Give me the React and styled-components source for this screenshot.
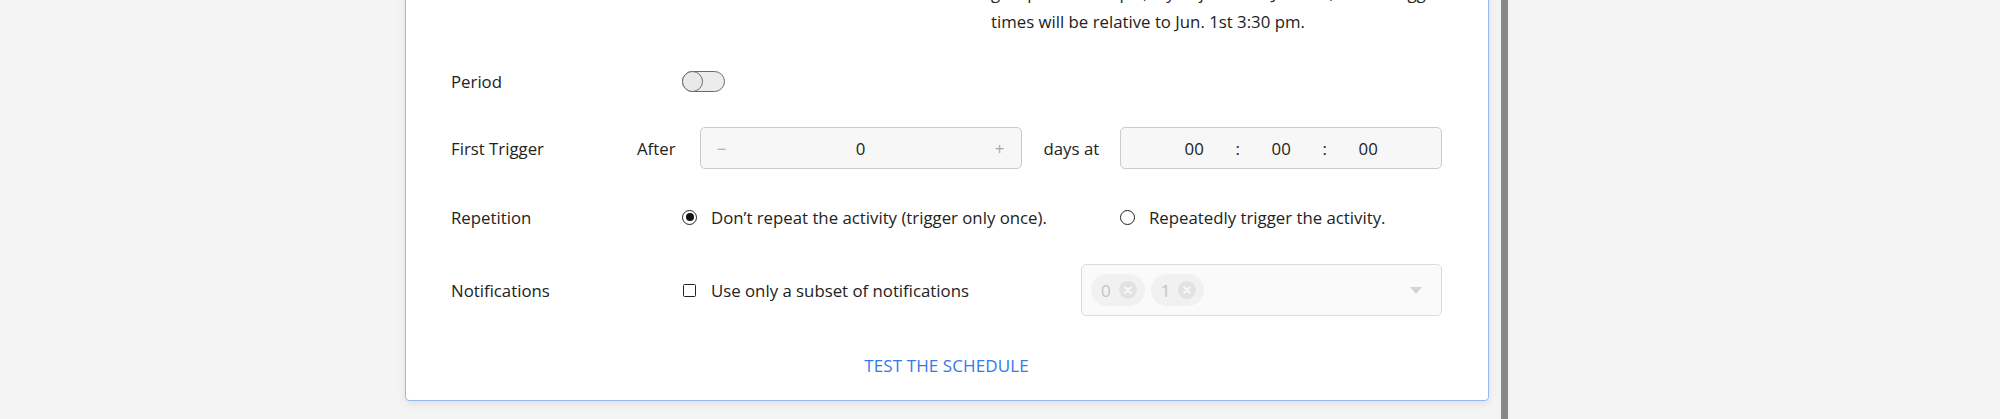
import React from 'react';
import styled, { createGlobalStyle } from 'styled-components';

const GlobalStyle = createGlobalStyle`
  html, body {
    margin: 0;
    padding: 0;
    height: 419px;
    overflow: hidden;
    background: #f4f4f4;
  }
  body {
    font-family: "Open Sans", "Noto Sans", sans-serif;
    color: #222;
  }
`;

const App = () => {
    return (
        <Layout>
            <GlobalStyle />
            <Pane>
                <Card>
                    <Description>
                        group. For example, if you join it on Jun. 1st, all the trigger
                        <br />
                        times will be relative to Jun. 1st 3:30 pm.
                    </Description>

                    <Row gap={24}>
                        <Label>Period</Label>
                        <Controls indent>
                            <Toggle><Knob /></Toggle>
                        </Controls>
                    </Row>

                    <Row gap={25}>
                        <Label>First Trigger</Label>
                        <Controls>
                            <InlineText right={24}>After</InlineText>
                            <NumberBox>
                                <StepSign>−</StepSign>
                                <span>0</span>
                                <StepSign>+</StepSign>
                            </NumberBox>
                            <InlineText left={22} right={21}>days at</InlineText>
                            <TimeBox>
                                <TimeCell>00</TimeCell>
                                <TimeCell>:</TimeCell>
                                <TimeCell>00</TimeCell>
                                <TimeCell>:</TimeCell>
                                <TimeCell>00</TimeCell>
                            </TimeBox>
                        </Controls>
                    </Row>

                    <Row gap={27}>
                        <Label>Repetition</Label>
                        <Controls indent>
                            <Option width={438}>
                                <Radio checked />
                                Don’t repeat the activity (trigger only once).
                            </Option>
                            <Option>
                                <Radio />
                                Repeatedly trigger the activity.
                            </Option>
                        </Controls>
                    </Row>

                    <Row gap={26} h={52}>
                        <Label>Notifications</Label>
                        <Controls indent>
                            <Option>
                                <Checkbox />
                                Use only a subset of notifications
                            </Option>
                            <Select>
                                <Chip>0<ChipX><XMark /></ChipX></Chip>
                                <Chip>1<ChipX><XMark /></ChipX></Chip>
                                <Arrow />
                            </Select>
                        </Controls>
                    </Row>

                    <Footer>
                        <TextButton>TEST THE SCHEDULE</TextButton>
                    </Footer>
                </Card>
            </Pane>
            <Divider />
            <Side />
        </Layout>
    );
};

const XMark = () => (
    <svg width="10" height="10" viewBox="0 0 10 10">
        <path d="M2 2 L8 8 M8 2 L2 8" stroke="#fff" strokeWidth="1.6" strokeLinecap="round" />
    </svg>
);

const Layout = styled.div`
    display: flex;
    height: 419px;
`

const Pane = styled.div`
    flex: 0 0 1501px;
    box-sizing: border-box;
    padding-left: 405px;
    overflow: hidden;
`

const Divider = styled.div`
    flex: 0 0 7px;
    background: #888;
`

const Side = styled.div`
    flex: 1;
    background: #f4f4f4;
`

const Card = styled.div`
    width: 1084px;
    box-sizing: border-box;
    margin-top: -40px;
    padding: 17px 46px 12px 45px;
    background: #fff;
    border: 1px solid #95b8f3;
    border-radius: 4px;
    box-shadow: 0 3px 8px rgba(0, 0, 0, 0.08);
    font-size: 16.8px;
`

const Description = styled.div`
    margin-left: 540px;
    line-height: 29px;
    white-space: nowrap;
`

const Row = styled.div`
    display: flex;
    align-items: center;
    height: ${(p) => p.h || 42}px;
    margin-top: ${(p) => p.gap}px;
`

const Label = styled.div`
    flex: 0 0 186px;
`

const Controls = styled.div`
    flex: 1;
    display: flex;
    align-items: center;
    padding-left: ${(p) => (p.indent ? 45 : 0)}px;
`

const Toggle = styled.div`
    width: 43px;
    height: 21px;
    box-sizing: border-box;
    border: 1.5px solid #6a6a6a;
    border-radius: 11px;
    background: #ececec;
    display: flex;
    align-items: center;
`

const Knob = styled.div`
    width: 21px;
    height: 21px;
    flex-shrink: 0;
    box-sizing: border-box;
    margin-left: -1.5px;
    border: 1.5px solid #6a6a6a;
    border-radius: 50%;
    background: #e9e9e9;
`

const InlineText = styled.span`
    margin-left: ${(p) => p.left || 0}px;
    margin-right: ${(p) => p.right || 0}px;
    white-space: nowrap;
`

const NumberBox = styled.div`
    width: 322px;
    height: 42px;
    box-sizing: border-box;
    padding: 0 16px;
    display: flex;
    align-items: center;
    justify-content: space-between;
    border: 1.5px solid #cbcbcb;
    border-radius: 5px;
    background: #f7f7f7;
`

const StepSign = styled.span`
    width: 10px;
    text-align: center;
    color: #a8a8a8;
`

const TimeBox = styled(NumberBox)`
    justify-content: center;
    padding: 0;
`

const TimeCell = styled.span`
    width: 43.5px;
    text-align: center;
`

const Option = styled.label`
    display: flex;
    align-items: center;
    width: ${(p) => (p.width ? `${p.width}px` : 'auto')};
    white-space: nowrap;
`

const Radio = styled.span`
    width: 15px;
    height: 15px;
    flex-shrink: 0;
    box-sizing: border-box;
    margin-right: 14px;
    border: 1.5px solid #222;
    border-radius: 50%;
    display: inline-flex;
    align-items: center;
    justify-content: center;
    &::after {
        content: '';
        display: ${(p) => (p.checked ? 'block' : 'none')};
        width: 8px;
        height: 8px;
        border-radius: 50%;
        background: #111;
    }
`

const Checkbox = styled.span`
    width: 13px;
    height: 13px;
    flex-shrink: 0;
    box-sizing: border-box;
    margin: 0 15px 0 1px;
    border: 1.5px solid #222;
    border-radius: 1.5px;
`

const Select = styled.div`
    margin-left: auto;
    width: 361px;
    height: 52px;
    box-sizing: border-box;
    padding: 0 19px 0 9px;
    display: flex;
    align-items: center;
    border: 1.5px solid #dcdcdc;
    border-radius: 5px;
    background: #fafafa;
`

const Chip = styled.span`
    height: 32px;
    box-sizing: border-box;
    margin-right: 6px;
    padding: 0 8px 0 10px;
    display: inline-flex;
    align-items: center;
    gap: 8px;
    border-radius: 16px;
    background: #f1f1f1;
    color: #c4c4c4;
    font-size: 17px;
`

const ChipX = styled.span`
    width: 18px;
    height: 18px;
    border-radius: 50%;
    background: #e2e2e2;
    display: inline-flex;
    align-items: center;
    justify-content: center;
`

const Arrow = styled.span`
    margin-left: auto;
    width: 0;
    height: 0;
    border-left: 6.5px solid transparent;
    border-right: 6.5px solid transparent;
    border-top: 7px solid #d3d3d3;
`

const Footer = styled.div`
    height: 46px;
    margin-top: 26px;
    display: flex;
    align-items: center;
    justify-content: center;
`

const TextButton = styled.button`
    border: none;
    background: none;
    padding: 0 8px;
    font-family: inherit;
    font-size: 17px;
    font-weight: 500;
    letter-spacing: 0.1px;
    color: #3579ea;
    cursor: pointer;
`

export default App;
